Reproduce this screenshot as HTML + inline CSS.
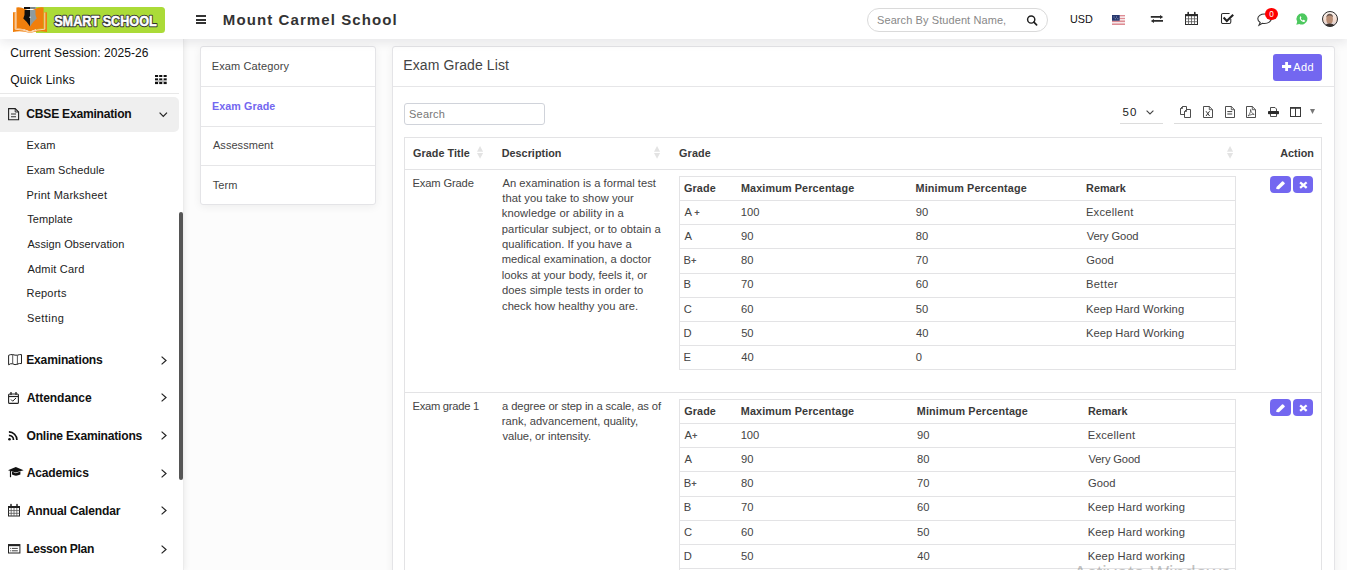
<!DOCTYPE html>
<html><head><meta charset="utf-8">
<style>
*{box-sizing:border-box;margin:0;padding:0}
html,body{width:1347px;height:570px;overflow:hidden;background:#fcfcfc;font-family:"Liberation Sans",sans-serif;color:#333}
.abs{position:absolute}
.t{position:absolute;white-space:nowrap;line-height:1}
svg{overflow:visible}
</style></head><body>

<div class="abs" style="left:200.00px;top:46.00px;width:176.00px;height:159.00px;background:#fff;border:1px solid #e4e4e7;border-radius:3px;box-shadow:0 2px 8px rgba(0,0,0,.06)"></div>
<div class="abs" style="left:201.00px;top:86.00px;width:174.00px;height:1.00px;background:#e6e6e8"></div>
<div class="abs" style="left:201.00px;top:126.00px;width:174.00px;height:1.00px;background:#e6e6e8"></div>
<div class="abs" style="left:201.00px;top:165.00px;width:174.00px;height:1.00px;background:#e6e6e8"></div>
<div class="t" style="left:211.80px;top:60.69px;font-size:11px;color:#444;letter-spacing:0.118px;">Exam Category</div>
<div class="t" style="left:211.98px;top:100.74px;font-size:10.7px;font-weight:bold;color:#7367f0;letter-spacing:0.104px;">Exam Grade</div>
<div class="t" style="left:212.98px;top:139.69px;font-size:11px;color:#444;letter-spacing:0.044px;">Assessment</div>
<div class="t" style="left:212.75px;top:180.29px;font-size:11px;color:#444;letter-spacing:0.070px;">Term</div>
<div class="abs" style="left:392.00px;top:46.00px;width:943.00px;height:574.00px;background:#fff;border:1px solid #e4e4e7;border-radius:3px;box-shadow:0 2px 8px rgba(0,0,0,.06)"></div>
<div class="abs" style="left:393.00px;top:86.00px;width:941.00px;height:1.00px;background:#e6e6e8"></div>
<div class="t" style="left:403.35px;top:57.85px;font-size:14px;color:#444;letter-spacing:0.092px;">Exam Grade List</div>
<div class="abs" style="left:1273.00px;top:54.00px;width:49.00px;height:26.80px;background:#7367f0;border-radius:3px"></div>
<svg class="abs" style="left:1281.60px;top:62.00px" width="9.2" height="9" viewBox="0 0 9.2 9"><path d="M3.2 0h2.8v3.1h3.2v2.8h-3.2v3.1h-2.8v-3.1h-3.2v-2.8h3.2z" fill="#fff"/></svg>
<div class="t" style="left:1293.28px;top:61.59px;font-size:11px;color:#fff;letter-spacing:0.379px;">Add</div>
<div class="abs" style="left:404.00px;top:103.00px;width:141.00px;height:22.00px;border:1px solid #d0d3da;border-radius:3px;background:#fff"></div>
<div class="t" style="left:409.00px;top:108.59px;font-size:11px;color:#777;letter-spacing:0.212px;">Search</div>
<div class="t" style="left:1122.54px;top:107.07px;font-size:11.5px;color:#222;letter-spacing:1.118px;">50</div>
<svg class="abs" style="left:1146.30px;top:109.70px" width="8" height="5" viewBox="0 0 8 5"><path d="M0.6 0.6L4 4L7.4 0.6" fill="none" stroke="#444" stroke-width="1.1"/></svg>
<div class="abs" style="left:1120.00px;top:122.80px;width:42.60px;height:1.00px;background:#dcdcdc"></div>
<div class="abs" style="left:1174.00px;top:122.80px;width:148.00px;height:1.00px;background:#dcdcdc"></div>
<svg class="abs" style="left:1180.00px;top:106.00px" width="11" height="12" viewBox="0 0 11 12"><path d="M0.5 2.5L2.5 0.5H6.5V8.5H0.5Z" fill="#fff" stroke="#3a3a3a" stroke-width="0.9"/><path d="M0.5 2.5H2.5V0.5" fill="none" stroke="#3a3a3a" stroke-width="0.8"/><path d="M4.5 5.5L6.5 3.5H10.5V11.5H4.5Z" fill="#fff" stroke="#3a3a3a" stroke-width="0.9"/><path d="M4.5 5.5H6.5V3.5" fill="none" stroke="#3a3a3a" stroke-width="0.8"/></svg>
<svg class="abs" style="left:1203.00px;top:106.00px" width="10" height="12" viewBox="0 0 10 12"><path d="M0.5 0.5H6.3L9.5 3.7V11.5H0.5Z" fill="#fff" stroke="#3a3a3a" stroke-width="0.9"/><path d="M6.3 0.5V3.7H9.5" fill="none" stroke="#3a3a3a" stroke-width="0.8"/><path d="M3 5.2L6.6 10M6.6 5.2L3 10" stroke="#3a3a3a" stroke-width="1"/></svg>
<svg class="abs" style="left:1225.00px;top:106.00px" width="10" height="12" viewBox="0 0 10 12"><path d="M0.5 0.5H6.3L9.5 3.7V11.5H0.5Z" fill="#fff" stroke="#3a3a3a" stroke-width="0.9"/><path d="M6.3 0.5V3.7H9.5" fill="none" stroke="#3a3a3a" stroke-width="0.8"/><path d="M2.3 5.6H7.2M2.3 8H7.2" stroke="#3a3a3a" stroke-width="1"/></svg>
<svg class="abs" style="left:1246.00px;top:106.00px" width="10" height="12" viewBox="0 0 10 12"><path d="M0.5 0.5H6.3L9.5 3.7V11.5H0.5Z" fill="#fff" stroke="#3a3a3a" stroke-width="0.9"/><path d="M6.3 0.5V3.7H9.5" fill="none" stroke="#3a3a3a" stroke-width="0.8"/><path d="M2 10C3.6 8.4 4.8 5.8 4.6 3.5C4.8 6 6.2 7.6 8.2 8.4C6.3 8.2 4 8.8 2 10z" fill="none" stroke="#3a3a3a" stroke-width="0.7"/></svg>
<svg class="abs" style="left:1268.00px;top:107.00px" width="11" height="10" viewBox="0 0 11 10"><path d="M2.5 4V0.5H7L8.5 2V4" fill="#fff" stroke="#3a3a3a" stroke-width="0.9"/><rect x="0" y="4" width="11" height="3.2" rx="0.8" fill="#2b2b2b"/><path d="M2.5 7V9.5H8.5V7" fill="#fff" stroke="#3a3a3a" stroke-width="0.9"/></svg>
<svg class="abs" style="left:1290.00px;top:107.00px" width="11" height="10" viewBox="0 0 11 10"><rect x="0.5" y="0.5" width="10" height="9" fill="#fff" stroke="#3a3a3a" stroke-width="1"/><path d="M0.5 1H10.5" stroke="#3a3a3a" stroke-width="1.6"/><path d="M5.5 1V9.5" stroke="#3a3a3a" stroke-width="1"/></svg>
<svg class="abs" style="left:1309.80px;top:108.50px" width="5" height="5" viewBox="0 0 5 5"><path d="M0 0h5l-2.5 5z" fill="#777"/></svg>
<div class="abs" style="left:404.00px;top:137.00px;width:918.00px;height:1.00px;background:#e3e3e5"></div>
<div class="abs" style="left:404.00px;top:137.00px;width:1.00px;height:463.00px;background:#e3e3e5"></div>
<div class="abs" style="left:1321.00px;top:137.00px;width:1.00px;height:463.00px;background:#e3e3e5"></div>
<div class="abs" style="left:404.00px;top:169.00px;width:918.00px;height:1.00px;background:#e3e3e5"></div>
<div class="abs" style="left:404.00px;top:392.00px;width:918.00px;height:1.00px;background:#e3e3e5"></div>
<div class="t" style="left:412.96px;top:147.66px;font-size:10.8px;font-weight:bold;color:#3a3a3a;letter-spacing:0.070px;">Grade Title</div>
<div class="t" style="left:501.68px;top:147.66px;font-size:10.8px;font-weight:bold;color:#3a3a3a;letter-spacing:0.038px;">Description</div>
<div class="t" style="left:679.06px;top:147.66px;font-size:10.8px;font-weight:bold;color:#3a3a3a;letter-spacing:0.125px;">Grade</div>
<div class="t" style="left:1280.27px;top:147.66px;font-size:10.8px;font-weight:bold;color:#3a3a3a;">Action</div>
<svg class="abs" style="left:476.80px;top:146.10px" width="6.1" height="12.8" viewBox="0 0 6.1 12.8"><path d="M3.05 0L6.1 5.7H0z M3.05 12.8L6.1 7.1H0z" fill="#e3e3e3"/></svg>
<svg class="abs" style="left:654.20px;top:146.10px" width="6.1" height="12.8" viewBox="0 0 6.1 12.8"><path d="M3.05 0L6.1 5.7H0z M3.05 12.8L6.1 7.1H0z" fill="#e3e3e3"/></svg>
<svg class="abs" style="left:1227.10px;top:146.10px" width="6.1" height="12.8" viewBox="0 0 6.1 12.8"><path d="M3.05 0L6.1 5.7H0z M3.05 12.8L6.1 7.1H0z" fill="#e3e3e3"/></svg>
<div class="t" style="left:412.48px;top:177.52px;font-size:11.2px;color:#444;letter-spacing:-0.150px;">Exam Grade</div>
<div class="t" style="left:502.48px;top:177.52px;font-size:11.2px;color:#444;letter-spacing:0.016px;">An examination is a formal test</div>
<div class="t" style="left:502.33px;top:192.89px;font-size:11.2px;color:#444;letter-spacing:0.033px;">that you take to show your</div>
<div class="t" style="left:501.75px;top:208.27px;font-size:11.2px;color:#444;letter-spacing:0.105px;">knowledge or ability in a</div>
<div class="t" style="left:501.78px;top:223.64px;font-size:11.2px;color:#444;letter-spacing:0.090px;">particular subject, or to obtain a</div>
<div class="t" style="left:502.03px;top:239.02px;font-size:11.2px;color:#444;letter-spacing:0.010px;">qualification. If you have a</div>
<div class="t" style="left:501.76px;top:254.39px;font-size:11.2px;color:#444;letter-spacing:0.030px;">medical examination, a doctor</div>
<div class="t" style="left:501.75px;top:269.77px;font-size:11.2px;color:#444;letter-spacing:0.025px;">looks at your body, feels it, or</div>
<div class="t" style="left:502.03px;top:285.14px;font-size:11.2px;color:#444;letter-spacing:0.049px;">does simple tests in order to</div>
<div class="t" style="left:502.02px;top:300.52px;font-size:11.2px;color:#444;letter-spacing:0.019px;">check how healthy you are.</div>
<div class="abs" style="left:1270.00px;top:176.00px;width:21.00px;height:16.60px;background:#7367f0;border-radius:4px"></div>
<div class="abs" style="left:1293.00px;top:176.00px;width:19.60px;height:16.60px;background:#7367f0;border-radius:4px"></div>
<svg class="abs" style="left:1275.80px;top:181.00px" width="9.2" height="8" viewBox="0 0 9.2 8"><path d="M0.2 7.9L0.5 5.9L6 0.5Q6.6 0 7.2 0.5L8.7 2Q9.1 2.5 8.6 3L3 8.2z" fill="#fff"/></svg>
<svg class="abs" style="left:1299.90px;top:181.90px" width="6.8" height="6.1" viewBox="0 0 6.8 6.1"><path d="M1 1L5.8 5.1M5.8 1L1 5.1" stroke="#fff" stroke-width="2.3" stroke-linecap="square"/></svg>
<div class="abs" style="left:679.00px;top:176.00px;width:1.00px;height:194.00px;background:#e3e3e5"></div>
<div class="abs" style="left:1235.00px;top:176.00px;width:1.00px;height:194.00px;background:#e3e3e5"></div>
<div class="abs" style="left:679.00px;top:176.00px;width:557.00px;height:1.00px;background:#e3e3e5"></div>
<div class="abs" style="left:679.00px;top:200.00px;width:557.00px;height:1.00px;background:#e3e3e5"></div>
<div class="abs" style="left:679.00px;top:224.00px;width:557.00px;height:1.00px;background:#e3e3e5"></div>
<div class="abs" style="left:679.00px;top:248.00px;width:557.00px;height:1.00px;background:#e3e3e5"></div>
<div class="abs" style="left:679.00px;top:273.00px;width:557.00px;height:1.00px;background:#e3e3e5"></div>
<div class="abs" style="left:679.00px;top:297.00px;width:557.00px;height:1.00px;background:#e3e3e5"></div>
<div class="abs" style="left:679.00px;top:321.00px;width:557.00px;height:1.00px;background:#e3e3e5"></div>
<div class="abs" style="left:679.00px;top:345.00px;width:557.00px;height:1.00px;background:#e3e3e5"></div>
<div class="abs" style="left:679.00px;top:369.00px;width:557.00px;height:1.00px;background:#e3e3e5"></div>
<div class="t" style="left:683.96px;top:182.86px;font-size:10.8px;font-weight:bold;color:#3a3a3a;letter-spacing:0.125px;">Grade</div>
<div class="t" style="left:740.88px;top:182.86px;font-size:10.8px;font-weight:bold;color:#3a3a3a;letter-spacing:0.138px;">Maximum Percentage</div>
<div class="t" style="left:915.58px;top:182.86px;font-size:10.8px;font-weight:bold;color:#3a3a3a;letter-spacing:0.145px;">Minimum Percentage</div>
<div class="t" style="left:1086.08px;top:182.86px;font-size:10.8px;font-weight:bold;color:#3a3a3a;">Remark</div>
<div class="t" style="left:684.38px;top:206.72px;font-size:11.2px;color:#444">A <span style="font-size:9.4px;vertical-align:0.5px;color:#555;font-weight:bold">+</span></div>
<div class="t" style="left:740.75px;top:206.72px;font-size:11.2px;color:#444;">100</div>
<div class="t" style="left:915.77px;top:206.72px;font-size:11.2px;color:#444;">90</div>
<div class="t" style="left:1085.88px;top:206.72px;font-size:11.2px;color:#444;letter-spacing:0.257px;">Excellent</div>
<div class="t" style="left:684.38px;top:230.72px;font-size:11.2px;color:#444;">A</div>
<div class="t" style="left:741.08px;top:230.72px;font-size:11.2px;color:#444;">90</div>
<div class="t" style="left:915.81px;top:230.72px;font-size:11.2px;color:#444;">80</div>
<div class="t" style="left:1086.75px;top:230.72px;font-size:11.2px;color:#444;letter-spacing:-0.146px;">Very Good</div>
<div class="t" style="left:683.48px;top:254.72px;font-size:11.2px;color:#444">B<span style="font-size:9.4px;vertical-align:0.5px;color:#555;font-weight:bold">+</span></div>
<div class="t" style="left:741.11px;top:254.72px;font-size:11.2px;color:#444;">80</div>
<div class="t" style="left:915.73px;top:254.72px;font-size:11.2px;color:#444;">70</div>
<div class="t" style="left:1086.24px;top:254.72px;font-size:11.2px;color:#444;">Good</div>
<div class="t" style="left:683.48px;top:278.72px;font-size:11.2px;color:#444;">B</div>
<div class="t" style="left:741.03px;top:278.72px;font-size:11.2px;color:#444;">70</div>
<div class="t" style="left:915.73px;top:278.72px;font-size:11.2px;color:#444;">60</div>
<div class="t" style="left:1085.88px;top:278.72px;font-size:11.2px;color:#444;letter-spacing:0.405px;">Better</div>
<div class="t" style="left:683.83px;top:303.72px;font-size:11.2px;color:#444;">C</div>
<div class="t" style="left:741.03px;top:303.72px;font-size:11.2px;color:#444;">60</div>
<div class="t" style="left:915.85px;top:303.72px;font-size:11.2px;color:#444;">50</div>
<div class="t" style="left:1085.88px;top:303.72px;font-size:11.2px;color:#444;letter-spacing:0.051px;">Keep Hard Working</div>
<div class="t" style="left:683.48px;top:327.72px;font-size:11.2px;color:#444;">D</div>
<div class="t" style="left:741.15px;top:327.72px;font-size:11.2px;color:#444;">50</div>
<div class="t" style="left:916.04px;top:327.72px;font-size:11.2px;color:#444;">40</div>
<div class="t" style="left:1085.88px;top:327.72px;font-size:11.2px;color:#444;letter-spacing:0.051px;">Keep Hard Working</div>
<div class="t" style="left:683.48px;top:351.72px;font-size:11.2px;color:#444;">E</div>
<div class="t" style="left:741.34px;top:351.72px;font-size:11.2px;color:#444;">40</div>
<div class="t" style="left:915.86px;top:351.72px;font-size:11.2px;color:#444;">0</div>
<div class="t" style="left:412.48px;top:400.52px;font-size:11.2px;color:#444;letter-spacing:-0.260px;">Exam grade 1</div>
<div class="t" style="left:502.02px;top:400.52px;font-size:11.2px;color:#444;letter-spacing:-0.098px;">a degree or step in a scale, as of</div>
<div class="t" style="left:501.76px;top:415.89px;font-size:11.2px;color:#444;letter-spacing:0.015px;">rank, advancement, quality,</div>
<div class="t" style="left:502.46px;top:431.27px;font-size:11.2px;color:#444;letter-spacing:-0.042px;">value, or intensity.</div>
<div class="abs" style="left:1270.00px;top:399.00px;width:21.00px;height:16.60px;background:#7367f0;border-radius:4px"></div>
<div class="abs" style="left:1293.00px;top:399.00px;width:19.60px;height:16.60px;background:#7367f0;border-radius:4px"></div>
<svg class="abs" style="left:1275.80px;top:404.00px" width="9.2" height="8" viewBox="0 0 9.2 8"><path d="M0.2 7.9L0.5 5.9L6 0.5Q6.6 0 7.2 0.5L8.7 2Q9.1 2.5 8.6 3L3 8.2z" fill="#fff"/></svg>
<svg class="abs" style="left:1299.90px;top:404.90px" width="6.8" height="6.1" viewBox="0 0 6.8 6.1"><path d="M1 1L5.8 5.1M5.8 1L1 5.1" stroke="#fff" stroke-width="2.3" stroke-linecap="square"/></svg>
<div class="abs" style="left:679.00px;top:399.00px;width:1.00px;height:194.00px;background:#e3e3e5"></div>
<div class="abs" style="left:1235.00px;top:399.00px;width:1.00px;height:194.00px;background:#e3e3e5"></div>
<div class="abs" style="left:679.00px;top:399.00px;width:557.00px;height:1.00px;background:#e3e3e5"></div>
<div class="abs" style="left:679.00px;top:423.00px;width:557.00px;height:1.00px;background:#e3e3e5"></div>
<div class="abs" style="left:679.00px;top:447.00px;width:557.00px;height:1.00px;background:#e3e3e5"></div>
<div class="abs" style="left:679.00px;top:471.00px;width:557.00px;height:1.00px;background:#e3e3e5"></div>
<div class="abs" style="left:679.00px;top:496.00px;width:557.00px;height:1.00px;background:#e3e3e5"></div>
<div class="abs" style="left:679.00px;top:520.00px;width:557.00px;height:1.00px;background:#e3e3e5"></div>
<div class="abs" style="left:679.00px;top:544.00px;width:557.00px;height:1.00px;background:#e3e3e5"></div>
<div class="abs" style="left:679.00px;top:568.00px;width:557.00px;height:1.00px;background:#e3e3e5"></div>
<div class="abs" style="left:679.00px;top:592.00px;width:557.00px;height:1.00px;background:#e3e3e5"></div>
<div class="t" style="left:684.16px;top:405.86px;font-size:10.8px;font-weight:bold;color:#3a3a3a;letter-spacing:0.125px;">Grade</div>
<div class="t" style="left:740.78px;top:405.86px;font-size:10.8px;font-weight:bold;color:#3a3a3a;letter-spacing:0.138px;">Maximum Percentage</div>
<div class="t" style="left:916.78px;top:405.86px;font-size:10.8px;font-weight:bold;color:#3a3a3a;letter-spacing:0.145px;">Minimum Percentage</div>
<div class="t" style="left:1087.88px;top:405.86px;font-size:10.8px;font-weight:bold;color:#3a3a3a;">Remark</div>
<div class="t" style="left:684.58px;top:429.72px;font-size:11.2px;color:#444">A<span style="font-size:9.4px;vertical-align:0.5px;color:#555;font-weight:bold">+</span></div>
<div class="t" style="left:740.65px;top:429.72px;font-size:11.2px;color:#444;">100</div>
<div class="t" style="left:916.98px;top:429.72px;font-size:11.2px;color:#444;">90</div>
<div class="t" style="left:1087.68px;top:429.72px;font-size:11.2px;color:#444;letter-spacing:0.257px;">Excellent</div>
<div class="t" style="left:684.58px;top:453.72px;font-size:11.2px;color:#444;">A</div>
<div class="t" style="left:740.98px;top:453.72px;font-size:11.2px;color:#444;">90</div>
<div class="t" style="left:917.01px;top:453.72px;font-size:11.2px;color:#444;">80</div>
<div class="t" style="left:1088.55px;top:453.72px;font-size:11.2px;color:#444;letter-spacing:-0.146px;">Very Good</div>
<div class="t" style="left:683.68px;top:477.72px;font-size:11.2px;color:#444">B<span style="font-size:9.4px;vertical-align:0.5px;color:#555;font-weight:bold">+</span></div>
<div class="t" style="left:741.01px;top:477.72px;font-size:11.2px;color:#444;">80</div>
<div class="t" style="left:916.93px;top:477.72px;font-size:11.2px;color:#444;">70</div>
<div class="t" style="left:1088.04px;top:477.72px;font-size:11.2px;color:#444;">Good</div>
<div class="t" style="left:683.68px;top:501.72px;font-size:11.2px;color:#444;">B</div>
<div class="t" style="left:740.93px;top:501.72px;font-size:11.2px;color:#444;">70</div>
<div class="t" style="left:916.93px;top:501.72px;font-size:11.2px;color:#444;">60</div>
<div class="t" style="left:1087.68px;top:501.72px;font-size:11.2px;color:#444;letter-spacing:0.131px;">Keep Hard working</div>
<div class="t" style="left:684.03px;top:526.72px;font-size:11.2px;color:#444;">C</div>
<div class="t" style="left:740.93px;top:526.72px;font-size:11.2px;color:#444;">60</div>
<div class="t" style="left:917.05px;top:526.72px;font-size:11.2px;color:#444;">50</div>
<div class="t" style="left:1087.68px;top:526.72px;font-size:11.2px;color:#444;letter-spacing:0.131px;">Keep Hard working</div>
<div class="t" style="left:683.68px;top:550.72px;font-size:11.2px;color:#444;">D</div>
<div class="t" style="left:741.05px;top:550.72px;font-size:11.2px;color:#444;">50</div>
<div class="t" style="left:917.24px;top:550.72px;font-size:11.2px;color:#444;">40</div>
<div class="t" style="left:1087.68px;top:550.72px;font-size:11.2px;color:#444;letter-spacing:0.131px;">Keep Hard working</div>
<div class="t" style="left:683.68px;top:574.72px;font-size:11.2px;color:#444;">E</div>
<div class="t" style="left:741.24px;top:574.72px;font-size:11.2px;color:#444;">40</div>
<div class="t" style="left:917.06px;top:574.72px;font-size:11.2px;color:#444;">0</div>
<div style="position:absolute;left:0;top:0;width:1347px;height:39px;z-index:10">
<div class="abs" style="left:0;top:0;width:1347px;height:39px;background:#fff;box-shadow:0 3px 10px rgba(30,30,50,.10)"></div>
<div class="abs" style="left:36.00px;top:7.00px;width:129.00px;height:25.60px;background:#abdb38;border-radius:0 3.5px 3.5px 0"></div>
<svg class="abs" style="left:53px;top:12px" width="106" height="16" viewBox="0 0 106 16"><g font-family="Liberation Sans" font-weight="bold" font-size="15" ><text x="1.2" y="14.2" textLength="102.5" lengthAdjust="spacingAndGlyphs" fill="#333" stroke="#333" stroke-width="2.6" stroke-linejoin="round">SMART SCHOOL</text><text x="1.2" y="14.2" textLength="102.5" lengthAdjust="spacingAndGlyphs" fill="#fff" stroke="#fff" stroke-width="0.5">SMART SCHOOL</text></g></svg>
<svg class="abs" style="left:13.00px;top:7.00px" width="34" height="26" viewBox="0 0 34 26"><path d="M0 5.2H2.8V21.6Q10 21.8 17 24.9Q24 21.8 31.2 21.6V5.2H34V24.9Q25 23.4 17 25.9Q9 23.4 0 24.9Z" fill="#f07f0c"/><path d="M2.2 5.5V22.2Q10 22.4 17 25.3Q24 22.4 31.8 22.2V5.5" fill="none" stroke="#fde3c8" stroke-width="0.9"/><path d="M3.4 0.5Q8 -0.2 12 2L17 4V24.6Q11 21.3 3.4 21.5Z" fill="#f07f0c"/><path d="M30.6 0.5Q26 -0.2 22 2L17 4V24.6Q23 21.3 30.6 21.5Z" fill="#f07f0c"/><rect x="11" y="0" width="6" height="2" fill="#111"/><rect x="17" y="0" width="5.8" height="2" fill="#7d8a8c"/><path d="M11.6 2.9H17V19.6Q14.3 15 10.3 11.6Q12 8.5 11.6 2.9z" fill="#111"/><path d="M17 2.9H22.4Q22 8.5 23.7 11.6Q19.7 15 17 19.6z" fill="#8e9b9d"/><circle cx="17" cy="10.2" r="0.7" fill="#eee"/></svg>
<div class="abs" style="left:196.00px;top:15.00px;width:10.00px;height:2.00px;background:#333"></div>
<div class="abs" style="left:196.00px;top:18.60px;width:10.00px;height:2.00px;background:#333"></div>
<div class="abs" style="left:196.00px;top:22.20px;width:10.00px;height:2.00px;background:#333"></div>
<div class="t" style="left:222.80px;top:12.30px;font-size:15px;font-weight:bold;color:#333;letter-spacing:1.099px;">Mount Carmel School</div>
<div class="abs" style="left:867.10px;top:8.20px;width:180.70px;height:23.40px;border:1px solid #dadada;border-radius:12px;background:#fff"></div>
<div class="t" style="left:877.00px;top:15.19px;font-size:11px;color:#888;letter-spacing:0.091px;">Search By Student Name,</div>
<svg class="abs" style="left:1026.00px;top:14.00px" width="12" height="12" viewBox="0 0 12 12"><circle cx="5.2" cy="5.5" r="3.6" fill="none" stroke="#1e1e1e" stroke-width="1.45"/><path d="M7.9 8.2L10.6 10.9" stroke="#1e1e1e" stroke-width="1.7" stroke-linecap="round"/></svg>
<div class="t" style="left:1070.07px;top:13.56px;font-size:10.8px;color:#111;letter-spacing:-0.076px;">USD</div>
<svg class="abs" style="left:1112.00px;top:15.00px" width="13" height="10" viewBox="0 0 13 10"><rect width="13" height="10" fill="#f6e6e8"/><path d="M0 0h13v1.2H0zM0 2.9h13v1.2H0zM0 5.6h13v1.3H0zM0 8.6h13v1.4H0z" fill="#de8d94"/><rect width="7.7" height="5.7" fill="#26376e"/><path d="M1.5 1.5h1v1h-1zM4 1.5h1v1H4zM2.8 3.2h1v1h-1zM5.3 3.2h1v1h-1z" fill="#8f9bbd"/></svg>
<svg class="abs" style="left:1150.00px;top:14.00px" width="14" height="10" viewBox="0 0 14 10"><path d="M0.8 2.9H10.8M3.2 6.9H13" stroke="#2a2a2a" stroke-width="1.7"/><path d="M10 0.9L13.2 2.9L10 4.9z M4 4.9L0.8 6.9L4 8.9z" fill="#2a2a2a"/></svg>
<svg class="abs" style="left:1185.00px;top:12.00px" width="13" height="13" viewBox="0 0 13 13"><rect x="0.5" y="2.6" width="12" height="9.9" fill="#fff" stroke="#2a2a2a" stroke-width="1"/><rect x="0.5" y="2.2" width="12" height="2" fill="#2a2a2a"/><path d="M3.2 0.6V3M9.8 0.6V3" stroke="#2a2a2a" stroke-width="1.6" stroke-linecap="round"/><path d="M0.5 6.8H12.5M0.5 9.7H12.5M3.5 4V12.5M6.5 4V12.5M9.5 4V12.5" stroke="#555" stroke-width="0.8"/></svg>
<svg class="abs" style="left:1221.00px;top:13.00px" width="13" height="11" viewBox="0 0 13 11"><path d="M9.8 6V9Q9.8 10.5 8.3 10.5H2Q0.5 10.5 0.5 9V2Q0.5 0.5 2 0.5H8.6" fill="none" stroke="#2a2a2a" stroke-width="1.05"/><path d="M2.6 4.6L5.8 7.9L12.2 1.7" fill="none" stroke="#222" stroke-width="2.1"/></svg>
<svg class="abs" style="left:1256.70px;top:12.80px" width="15" height="13" viewBox="0 0 15 13"><path d="M7.5 1C3.7 1 0.8 3.1 0.8 5.8c0 1.5 0.9 2.8 2.4 3.7L2 12.3l3.4-2c0.7 0.1 1.4 0.2 2.1 0.2c3.8 0 6.7-2.1 6.7-4.7S11.3 1 7.5 1z" fill="#fff" stroke="#333" stroke-width="1.1"/></svg>
<div class="abs" style="left:1265px;top:7.9px;width:13px;height:12.5px;border-radius:50%;background:#fe0000"></div>
<div class="t" style="left:1269.28px;top:11.16px;font-size:8.2px;color:#fff;font-family:"Liberation Serif",serif">0</div>
<svg class="abs" style="left:1296.00px;top:12.90px" width="12" height="12" viewBox="0 0 12 12"><path d="M6 0.3a5.6 5.6 0 0 0-4.8 8.5L0.3 11.7l3-0.8A5.6 5.6 0 1 0 6 0.3z" fill="#4dc85f"/><path d="M3.9 3.1c.3-.2.6-.2.8.1l.6 1.2c.1.3 0 .5-.2.7l-.3.3c.4.9 1.1 1.6 2 2l.3-.3c.2-.2.5-.3.7-.2l1.2.6c.3.2.3.5.1.8-.4.6-1 .9-1.7.7-1.7-.5-3.1-1.9-3.6-3.6-.2-.7.1-1.3.7-1.7z" fill="#fff"/></svg>
<svg class="abs" style="left:1322.00px;top:10.90px" width="16" height="16" viewBox="0 0 16 16"><defs><clipPath id="av"><circle cx="8" cy="8" r="7.5"/></clipPath><linearGradient id="avg" x1="0" y1="0" x2="0" y2="1"><stop offset="0" stop-color="#fbf7f3"/><stop offset="0.6" stop-color="#f3d9cc"/><stop offset="1" stop-color="#c9c9d6"/></linearGradient></defs><g clip-path="url(#av)"><rect width="16" height="16" fill="url(#avg)"/><ellipse cx="7.6" cy="8.2" rx="3.3" ry="4.6" fill="#b88d74"/><path d="M4.3 6.5Q4.5 2.6 7.8 2.7Q11 2.8 11 6.3Q10 4.5 7.6 4.6Q5.3 4.6 4.3 6.5z" fill="#6d5a52"/><path d="M2.5 16Q4 12.3 7.6 12.6Q11.5 12.4 13.5 16z" fill="#3a302c"/></g><circle cx="8" cy="8" r="7.5" fill="none" stroke="#2e2e2e" stroke-width="1"/></svg>
</div>
<div class="abs" style="left:0;top:39px;width:183.5px;height:531px;background:#fff;box-shadow:1px 0 6px rgba(0,0,0,.07);border-right:1px solid #ececec"></div>
<div class="t" style="left:10.19px;top:47.14px;font-size:12px;color:#111;letter-spacing:0.069px;">Current Session: 2025-26</div>
<div class="t" style="left:10.23px;top:73.86px;font-size:12.1px;color:#111;letter-spacing:0.197px;">Quick Links</div>
<svg class="abs" style="left:155.00px;top:75.00px" width="12" height="9.2" viewBox="0 0 12 9.2"><rect x="0" y="0" width="3.1" height="2.1" fill="#111"/><rect x="4.2" y="0" width="3.1" height="2.1" fill="#111"/><rect x="8.6" y="0" width="3.1" height="2.1" fill="#111"/><rect x="0" y="3.2" width="3.1" height="2.1" fill="#111"/><rect x="4.2" y="3.2" width="3.1" height="2.1" fill="#111"/><rect x="8.6" y="3.2" width="3.1" height="2.1" fill="#111"/><rect x="0" y="7" width="3.1" height="2.1" fill="#111"/><rect x="4.2" y="7" width="3.1" height="2.1" fill="#111"/><rect x="8.6" y="7" width="3.1" height="2.1" fill="#111"/><rect x="0" y="2" width="11.7" height="1.2" fill="#fff"/><rect x="0" y="5.3" width="11.7" height="1.7" fill="#888" opacity="0.6"/></svg>
<div class="abs" style="left:0.00px;top:93.20px;width:179.00px;height:1.00px;background:#e8e8e8"></div>
<div class="abs" style="left:0.00px;top:97.00px;width:179.00px;height:34.70px;background:#efefef;border-radius:0 5px 5px 0"></div>
<svg class="abs" style="left:8.00px;top:107.60px" width="11.5" height="12.5" viewBox="0 0 11.5 12.5"><path d="M0.6 0.6H7.2L10.6 4V11.8H0.6Z" fill="none" stroke="#222" stroke-width="1.1"/><path d="M7.2 0.6V4H10.6" fill="none" stroke="#222" stroke-width="0.9"/><path d="M3 6H8M3 8.8H8" stroke="#333" stroke-width="1.1"/></svg>
<div class="t" style="left:26.30px;top:107.86px;font-size:12.1px;font-weight:bold;color:#111;letter-spacing:-0.232px;">CBSE Examination</div>
<svg class="abs" style="left:159.40px;top:111.80px" width="8.6" height="5.2" viewBox="0 0 8.6 5.2"><path d="M0.6 0.6L4.3 4.4L8 0.6" fill="none" stroke="#222" stroke-width="1.2"/></svg>
<div class="t" style="left:26.50px;top:139.99px;font-size:11px;color:#222;letter-spacing:0.270px;">Exam</div>
<div class="t" style="left:26.50px;top:164.69px;font-size:11px;color:#222;letter-spacing:0.087px;">Exam Schedule</div>
<div class="t" style="left:26.50px;top:189.89px;font-size:11px;color:#222;letter-spacing:0.247px;">Print Marksheet</div>
<div class="t" style="left:27.15px;top:214.09px;font-size:11px;color:#222;letter-spacing:0.126px;">Template</div>
<div class="t" style="left:27.38px;top:238.79px;font-size:11px;color:#222;letter-spacing:0.097px;">Assign Observation</div>
<div class="t" style="left:27.38px;top:263.89px;font-size:11px;color:#222;letter-spacing:0.213px;">Admit Card</div>
<div class="t" style="left:26.50px;top:288.19px;font-size:11px;color:#222;letter-spacing:0.231px;">Reports</div>
<div class="t" style="left:26.90px;top:312.89px;font-size:11px;color:#222;letter-spacing:0.460px;">Setting</div>
<div class="t" style="left:26.19px;top:354.26px;font-size:12.1px;font-weight:bold;color:#111;letter-spacing:-0.188px;">Examinations</div>
<svg class="abs" style="left:161.00px;top:355.70px" width="6" height="9" viewBox="0 0 6 9"><path d="M0.6 0.6L5 4.5L0.6 8.4" fill="none" stroke="#222" stroke-width="1.2"/></svg>
<div class="t" style="left:26.70px;top:391.96px;font-size:12.1px;font-weight:bold;color:#111;letter-spacing:-0.097px;">Attendance</div>
<svg class="abs" style="left:161.00px;top:393.40px" width="6" height="9" viewBox="0 0 6 9"><path d="M0.6 0.6L5 4.5L0.6 8.4" fill="none" stroke="#222" stroke-width="1.2"/></svg>
<div class="t" style="left:26.50px;top:429.96px;font-size:12.1px;font-weight:bold;color:#111;letter-spacing:-0.211px;">Online Examinations</div>
<svg class="abs" style="left:161.00px;top:431.40px" width="6" height="9" viewBox="0 0 6 9"><path d="M0.6 0.6L5 4.5L0.6 8.4" fill="none" stroke="#222" stroke-width="1.2"/></svg>
<div class="t" style="left:26.70px;top:467.16px;font-size:12.1px;font-weight:bold;color:#111;letter-spacing:-0.212px;">Academics</div>
<svg class="abs" style="left:161.00px;top:468.60px" width="6" height="9" viewBox="0 0 6 9"><path d="M0.6 0.6L5 4.5L0.6 8.4" fill="none" stroke="#222" stroke-width="1.2"/></svg>
<div class="t" style="left:26.70px;top:504.76px;font-size:12.1px;font-weight:bold;color:#111;letter-spacing:-0.161px;">Annual Calendar</div>
<svg class="abs" style="left:161.00px;top:506.20px" width="6" height="9" viewBox="0 0 6 9"><path d="M0.6 0.6L5 4.5L0.6 8.4" fill="none" stroke="#222" stroke-width="1.2"/></svg>
<div class="t" style="left:26.19px;top:543.16px;font-size:12.1px;font-weight:bold;color:#111;letter-spacing:-0.302px;">Lesson Plan</div>
<svg class="abs" style="left:161.00px;top:544.60px" width="6" height="9" viewBox="0 0 6 9"><path d="M0.6 0.6L5 4.5L0.6 8.4" fill="none" stroke="#222" stroke-width="1.2"/></svg>
<svg class="abs" style="left:8.00px;top:354.00px" width="14" height="12" viewBox="0 0 14 12"><path d="M0.6 1.3Q2.5 0.3 4.7 0.6Q7 1.4 9.4 1.2Q11.5 0.3 13.5 0.6V9.6Q11.5 9.1 9.4 10.1Q7 11.4 4.7 9.8Q2.5 9.2 0.6 10.8Z" fill="none" stroke="#222" stroke-width="1"/><path d="M4.7 0.6V9.8M9.4 1.2V10.8" stroke="#444" stroke-width="0.9"/></svg>
<svg class="abs" style="left:8.00px;top:391.70px" width="11" height="12" viewBox="0 0 11 12"><rect x="0.6" y="2" width="9.8" height="9.4" rx="1" fill="none" stroke="#222" stroke-width="1.1"/><path d="M0.6 4.5h9.8" stroke="#222" stroke-width="1.2"/><path d="M3 0v3M8 0v3" stroke="#222" stroke-width="1.3"/><path d="M3 7.5l1.7 1.7L8 6" fill="none" stroke="#222" stroke-width="1"/></svg>
<svg class="abs" style="left:8.00px;top:430.90px" width="10" height="9.5" viewBox="0 0 10 9.5"><path d="M0.9 0.9A8 8 0 0 1 8.9 8.9M0.9 4.3A4.6 4.6 0 0 1 5.5 8.9" fill="none" stroke="#111" stroke-width="1.7"/><circle cx="1.5" cy="8.3" r="1.3" fill="#111"/></svg>
<svg class="abs" style="left:8.00px;top:467.20px" width="16" height="11" viewBox="0 0 16 11"><path d="M7.8 0L15.6 3.3L7.8 5.4L0 3.3z" fill="#111"/><path d="M4 4.6V7.6Q7.8 9.8 12.4 7.6V4.6L7.8 6.2z" fill="#111"/><path d="M2.5 3.6V10.2" stroke="#111" stroke-width="1.2"/></svg>
<svg class="abs" style="left:8.00px;top:504.40px" width="12" height="12.5" viewBox="0 0 12 12.5"><rect x="0.5" y="2.5" width="11" height="9.5" fill="#fff" stroke="#222" stroke-width="1"/><rect x="0.5" y="2.1" width="11" height="1.9" fill="#222"/><path d="M3 0.6V3M9 0.6V3" stroke="#222" stroke-width="1.5" stroke-linecap="round"/><path d="M0.5 6.6H11.5M0.5 9.3H11.5M3.2 4V12M6 4V12M8.8 4V12" stroke="#555" stroke-width="0.8"/></svg>
<svg class="abs" style="left:8.00px;top:543.60px" width="12.5" height="9.5" viewBox="0 0 12.5 9.5"><rect x="0.5" y="0.6" width="11.4" height="8.4" fill="#fff" stroke="#222" stroke-width="1"/><path d="M0.5 1.3H11.9" stroke="#222" stroke-width="1.8"/><path d="M3.8 4.4H9.8M3.8 6.8H9.8" stroke="#444" stroke-width="1"/><path d="M2 4.4H2.8M2 6.8H2.8" stroke="#444" stroke-width="1"/></svg>
<div class="abs" style="left:179.20px;top:211.80px;width:3.60px;height:268.70px;background:#555;border-radius:2px"></div>
<div class="t" style="left:1073.46px;top:563.07px;font-size:20px;color:rgba(120,120,120,.45);">Activate Windows</div>
</body></html>
